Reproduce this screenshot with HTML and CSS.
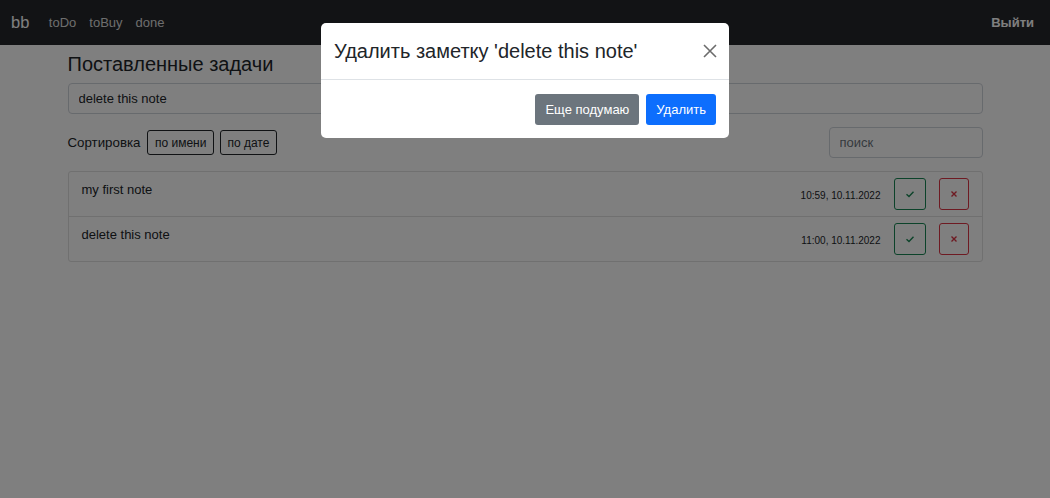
FILE: index.html
```html
<!DOCTYPE html>
<html lang="ru">
<head>
<meta charset="utf-8">
<title>bb</title>
<link rel="stylesheet" href="styles.css">
</head>
<body>
<nav class="navbar">
  <div class="nav-left">
    <span class="brand">bb</span>
    <a class="nav-link">toDo</a>
    <a class="nav-link">toBuy</a>
    <a class="nav-link">done</a>
  </div>
  <a class="logout">Выйти</a>
</nav>
<main class="container">
  <h4 class="title">Поставленные задачи</h4>
  <input class="form-input" type="text" value="delete this note">
  <div class="sort-row">
    <div class="sort-left">
      <span class="sort-label">Сортировка</span>
      <button class="btn-sm">по имени</button>
      <button class="btn-sm">по дате</button>
    </div>
    <input class="search" type="text" placeholder="поиск">
  </div>
  <ul class="list">
    <li class="item">
      <span class="item-text">my first note</span>
      <div class="item-right">
        <span class="date">10:59, 10.11.2022</span>
        <button class="icon-btn ok"><svg width="10" height="10" viewBox="0 0 10 10"><path d="M1.5 5.2 L4 7.5 L8.5 2.8" fill="none" stroke="currentColor" stroke-width="1.4"/></svg></button>
        <button class="icon-btn del"><svg width="8" height="8" viewBox="0 0 8 8"><path d="M1.5 1.5 L6.5 6.5 M6.5 1.5 L1.5 6.5" fill="none" stroke="currentColor" stroke-width="1.4"/></svg></button>
      </div>
    </li>
    <li class="item">
      <span class="item-text">delete this note</span>
      <div class="item-right">
        <span class="date">11:00, 10.11.2022</span>
        <button class="icon-btn ok"><svg width="10" height="10" viewBox="0 0 10 10"><path d="M1.5 5.2 L4 7.5 L8.5 2.8" fill="none" stroke="currentColor" stroke-width="1.4"/></svg></button>
        <button class="icon-btn del"><svg width="8" height="8" viewBox="0 0 8 8"><path d="M1.5 1.5 L6.5 6.5 M6.5 1.5 L1.5 6.5" fill="none" stroke="currentColor" stroke-width="1.4"/></svg></button>
      </div>
    </li>
  </ul>
</main>
<div class="backdrop"></div>
<div class="modal">
  <div class="modal-header">
    <h5 class="modal-title">Удалить заметку 'delete this note'</h5>
    <button class="close"><svg width="14" height="14" viewBox="0 0 14 14"><path d="M1 1 L13 13 M13 1 L1 13" stroke="currentColor" stroke-width="1.6" fill="none"/></svg></button>
  </div>
  <div class="modal-footer">
    <button class="btn secondary">Еще подумаю</button>
    <button class="btn primary">Удалить</button>
  </div>
</div>
</body>
</html>
```
FILE: styles.css
```css
* { box-sizing: border-box; }
html, body { margin: 0; padding: 0; }
body {
  width: 1050px;
  height: 498px;
  overflow: hidden;
  background: #fff;
  color: #212529;
  font-family: "Liberation Sans", Arial, sans-serif;
  font-size: 13px;
  position: relative;
}
.navbar {
  height: 45px;
  background: #25272b;
  display: flex;
  align-items: center;
  justify-content: space-between;
  padding: 0 16px 0 11px;
}
.nav-left { display: flex; align-items: center; }
.brand { color: #fff; font-size: 16.5px; margin-right: 13px; }
.nav-link { color: #dcdcdc; font-size: 13px; padding: 0 6.5px; }
.logout { color: #fff; font-weight: bold; font-size: 13px; }
.container {
  width: 915px;
  margin: 0 auto;
  padding-top: 7px;
}
.title {
  font-size: 20px;
  font-weight: 500;
  line-height: 24px;
  margin: 0 0 7px;
}
.form-input {
  display: block;
  width: 100%;
  height: 31px;
  border: 1px solid #ced4da;
  border-radius: 4px;
  padding: 0 10px;
  font-family: inherit;
  font-size: 13px;
  color: #212529;
}
.sort-row {
  display: flex;
  justify-content: space-between;
  align-items: center;
  margin-top: 13px;
}
.sort-left { display: flex; align-items: center; gap: 6px; }
.sort-label { margin-right: 1px; font-size: 13.3px; }
.btn-sm {
  height: 25px;
  padding: 0 6.5px;
  border: 1px solid #212529;
  border-radius: 3px;
  background: transparent;
  color: #212529;
  font-family: inherit;
  font-size: 12px;
}
.search {
  width: 154px;
  height: 31px;
  border: 1px solid #ced4da;
  border-radius: 4px;
  padding: 0 10px;
  font-family: inherit;
  font-size: 13px;
}
.search::placeholder { color: #6c757d; }
.list {
  list-style: none;
  margin: 13px 0 0;
  padding: 0;
  border: 1px solid #e0e0e0;
  border-radius: 3px;
}
.item {
  height: 44px;
  display: flex;
  justify-content: space-between;
  padding: 0 13px 0 13px;
}
.item + .item { border-top: 1px solid #e0e0e0; height: 45px; }
.item-text { padding-top: 10px; font-size: 13px; }
.item-right { display: flex; align-items: center; }
.date { font-size: 10px; margin-right: 13px; padding-top: 2px; }
.icon-btn {
  width: 32px;
  height: 32px;
  border-radius: 3px;
  background: transparent;
  display: flex;
  align-items: center;
  justify-content: center;
  padding: 0;
}
.icon-btn.ok { border: 1px solid #198754; color: #198754; margin-right: 13px; }
.icon-btn.del { border: 1px solid #dc3545; color: #dc3545; width: 30px; }
.backdrop {
  position: absolute;
  inset: 0;
  background: rgba(0,0,0,0.5);
}
.modal {
  position: absolute;
  top: 23px;
  left: 321px;
  width: 408px;
  background: #fff;
  border-radius: 5px;
}
.modal-header {
  height: 57px;
  display: flex;
  align-items: center;
  justify-content: space-between;
  padding: 0 12px 0 13px;
  border-bottom: 1px solid #dee2e6;
}
.modal-title {
  margin: 0;
  font-size: 20px;
  font-weight: 500;
  color: #212529;
  line-height: 24px;
}
.close {
  border: 0;
  background: transparent;
  color: #6c6c6c;
  padding: 0;
  width: 14px;
  height: 14px;
  display: flex;
}
.modal-footer {
  display: flex;
  justify-content: flex-end;
  gap: 7px;
  padding: 14px 13px 13px;
}
.btn {
  height: 31px;
  padding: 0 10px;
  border: 0;
  border-radius: 3px;
  color: #fff;
  font-family: inherit;
  font-size: 13px;
}
.btn.secondary { background: #6c757d; }
.btn.primary { background: #0d6efd; }
```
